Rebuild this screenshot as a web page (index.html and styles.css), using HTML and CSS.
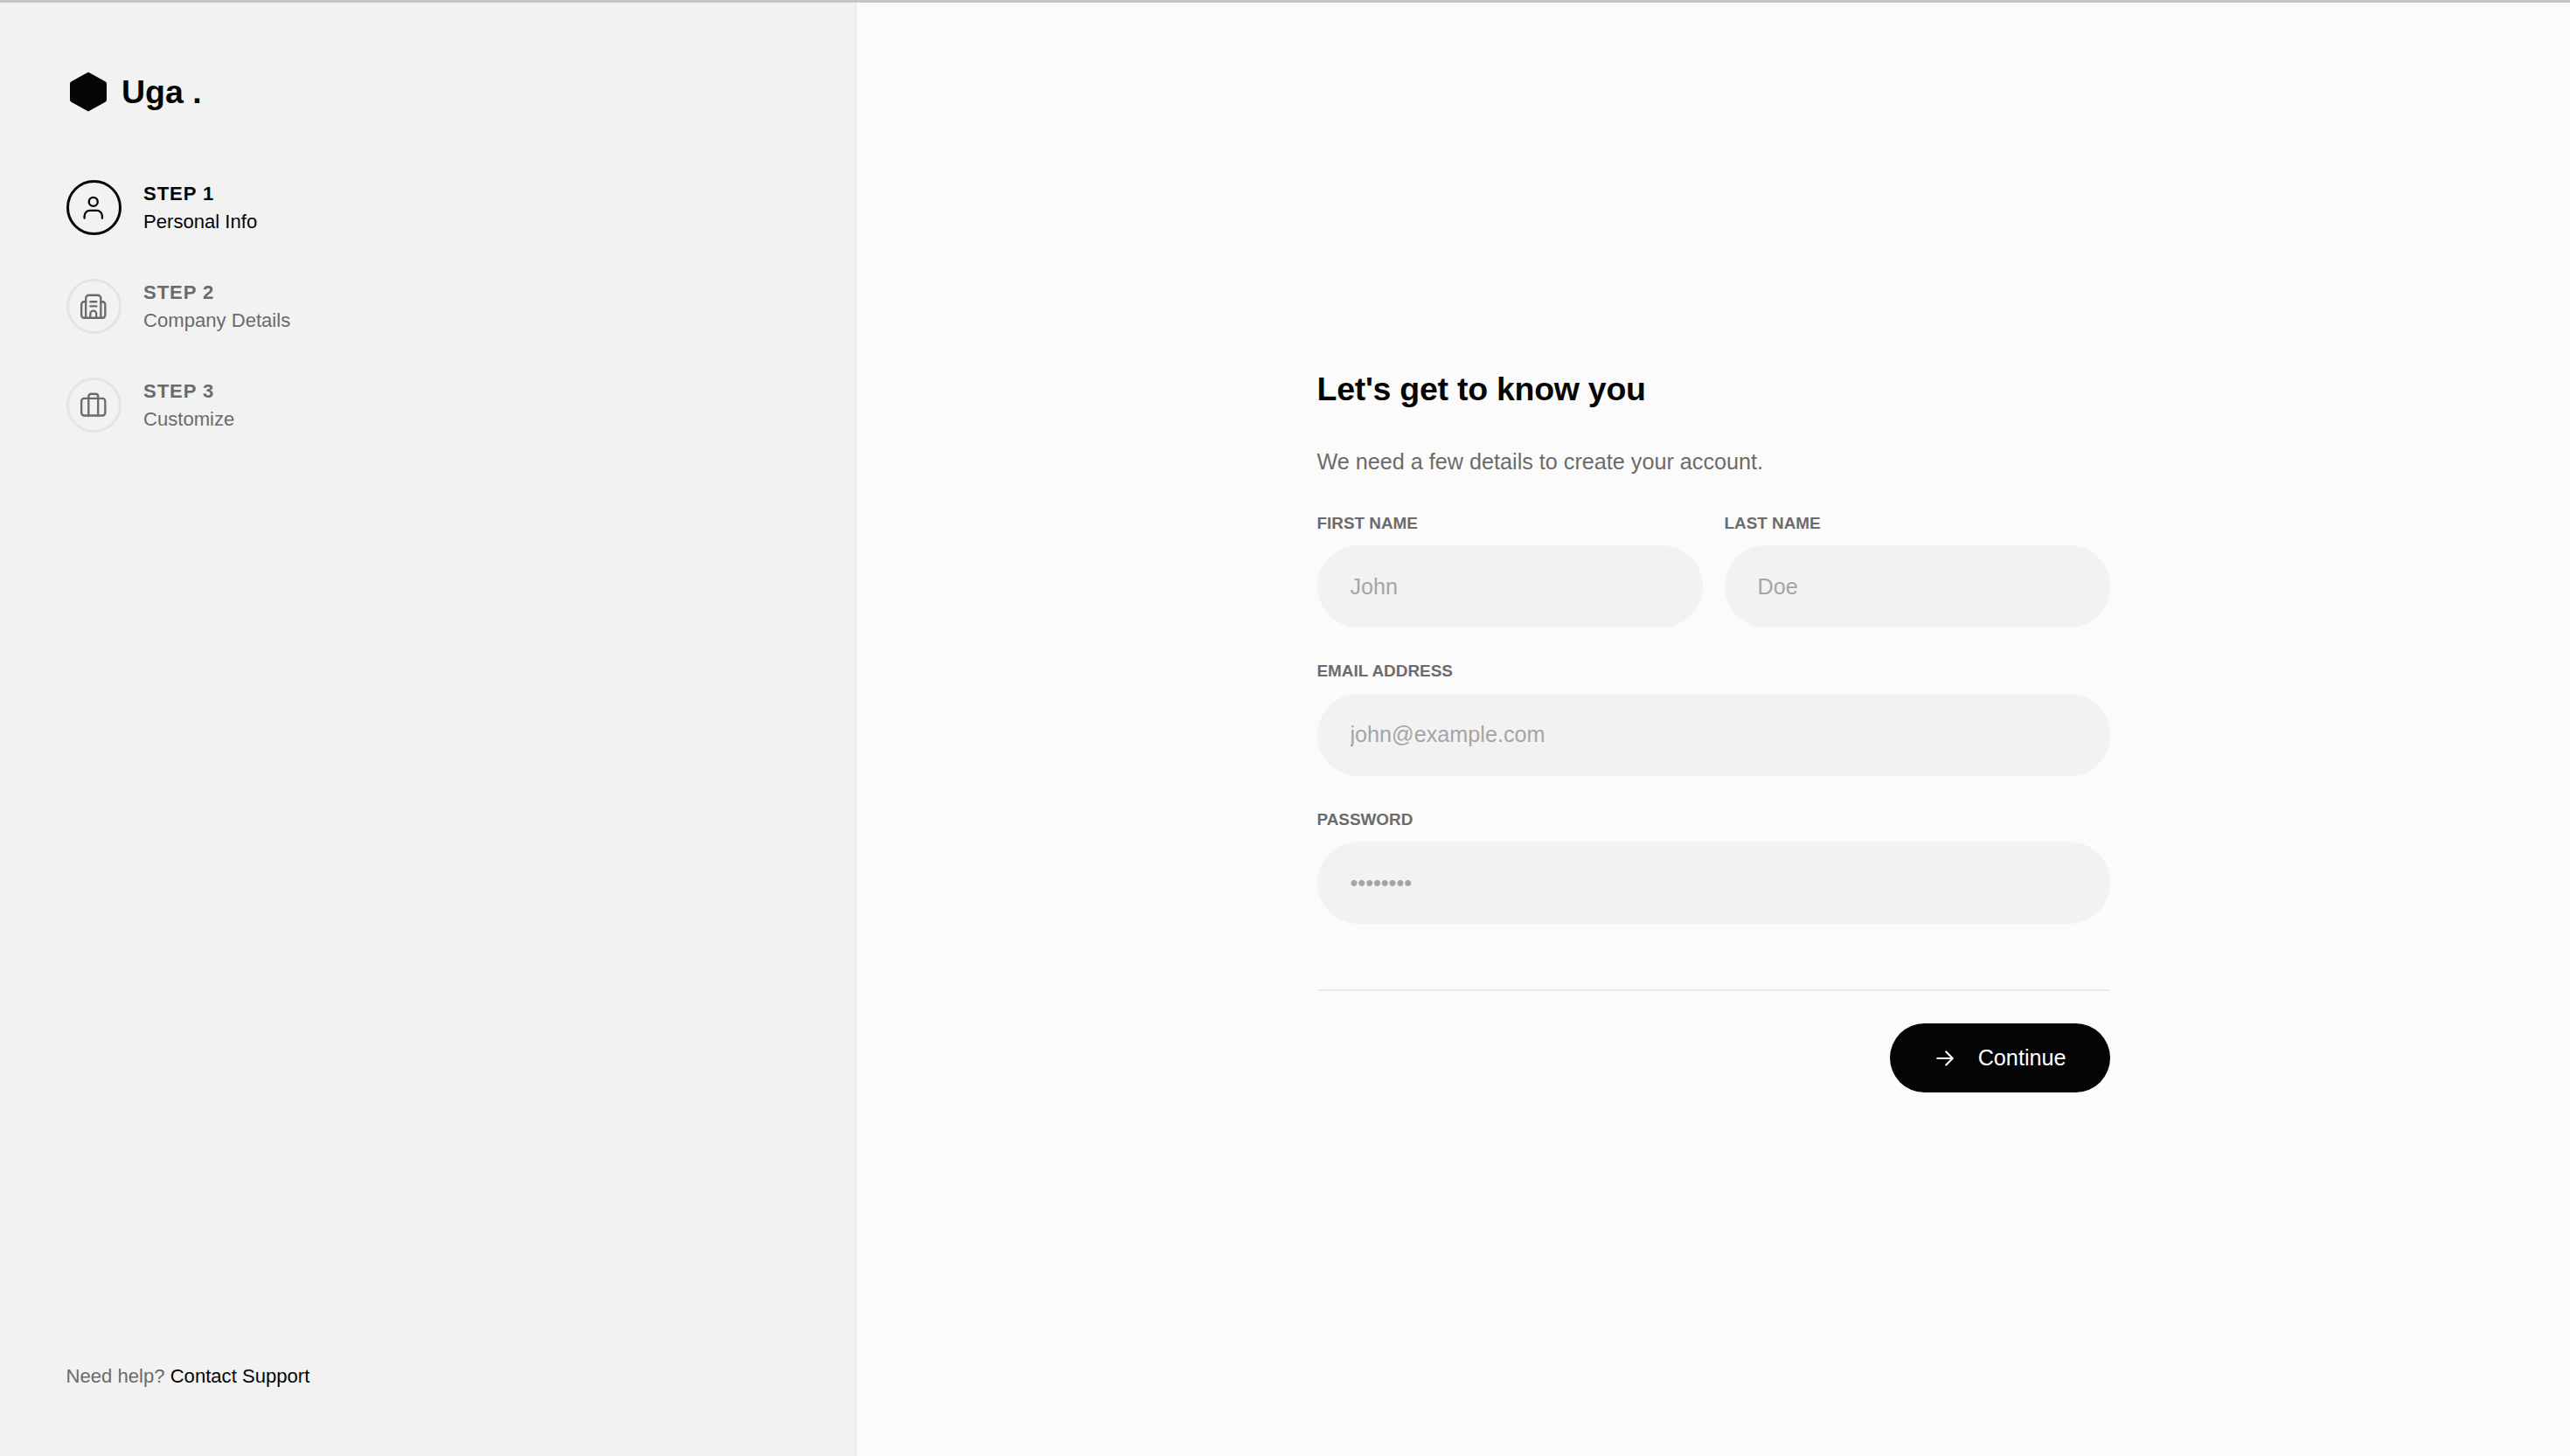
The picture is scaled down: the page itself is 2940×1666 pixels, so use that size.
FILE: index.html
```html
<!DOCTYPE html>
<html lang="en">
<head>
<meta charset="utf-8">
<title>Uga</title>
<link rel="stylesheet" href="styles.css">
</head>
<body>
<div class="topbar"></div>
<div class="layout">
  <aside class="sidebar">
    <div class="logo">
      <svg class="logo-mark" viewBox="0 0 42 46"><path d="M21 0.5 40 11a3 3 0 0 1 2 2.500v19a3 3 0 0 1-2 2.500L21 45.500 2 35a3 3 0 0 1-2-2.500v-19A3 3 0 0 1 2 11Z"/></svg>
      <span class="logo-text">Uga .</span>
    </div>
    <ol class="steps">
      <li class="step step-active">
        <span class="step-icon"><svg viewBox="0 0 24 24"><circle cx="12" cy="7.600" r="3.200"/><path d="M5.500 19.500V18a4 4 0 0 1 4-4h5a4 4 0 0 1 4 4v1.500"/></svg></span>
        <span class="step-text"><span class="step-num">STEP 1</span><span class="step-name">Personal Info</span></span>
      </li>
      <li class="step">
        <span class="step-icon"><svg viewBox="0 0 24 24"><path d="M6.500 20.300V6a2.300 2.300 0 0 1 2.300-2.300h6.400A2.300 2.300 0 0 1 17.500 6v14.300"/><path d="M17.500 8.500h1.200a2 2 0 0 1 2 2v7.800a2 2 0 0 1-2 2H5.300a2 2 0 0 1-2-2v-7.800a2 2 0 0 1 2-2h1.200"/><path d="M9.800 8.500h4.500M9.800 11.800h4.500"/><path d="M9.800 20.300v-3a2.200 2.200 0 0 1 4.400 0v3"/></svg></span>
        <span class="step-text"><span class="step-num">STEP 2</span><span class="step-name">Company Details</span></span>
      </li>
      <li class="step">
        <span class="step-icon"><svg viewBox="0 0 24 24"><rect x="3.300" y="7" width="17.400" height="12.500" rx="2"/><path d="M8.500 19.500V5.500a1.800 1.800 0 0 1 1.800-1.800h3.400a1.800 1.800 0 0 1 1.800 1.800v14"/></svg></span>
        <span class="step-text"><span class="step-num">STEP 3</span><span class="step-name">Customize</span></span>
      </li>
    </ol>
    <p class="help">Need help? <a class="help-link" href="#">Contact Support</a></p>
  </aside>
  <main class="main">
    <form class="form">
      <h1 class="title">Let's get to know you</h1>
      <p class="subtitle">We need a few details to create your account.</p>
      <div class="name-row">
        <label class="field"><span class="label">FIRST NAME</span><input class="input" type="text" placeholder="John"></label>
        <label class="field"><span class="label">LAST NAME</span><input class="input" type="text" placeholder="Doe"></label>
      </div>
      <label class="field"><span class="label">EMAIL ADDRESS</span><input class="input" type="email" placeholder="john@example.com"></label>
      <label class="field"><span class="label">PASSWORD</span><input class="input" type="password" placeholder="••••••••"></label>
      <div class="actions">
        <button class="continue" type="button">
          <svg class="arrow" viewBox="0 0 24 24"><path d="M5 12h14M13 6l6 6-6 6"/></svg>
          <span>Continue</span>
        </button>
      </div>
    </form>
  </main>
</div>
</body>
</html>
```

FILE: styles.css
```css
* { box-sizing: border-box; }
html, body { margin: 0; height: 100%; }
body {
  display: flex;
  flex-direction: column;
  font-family: "Liberation Sans", Arial, sans-serif;
  background: #fbfbfb;
  color: #050505;
}
.topbar { height: 3px; flex: none; background: #c9c4c4; }
.layout { flex: 1; display: flex; min-height: 0; }
.sidebar {
  width: 980px;
  flex: none;
  display: flex;
  flex-direction: column;
  padding: 79px 75px 74px 75.500px;
  background: #f2f2f2;
  border-right: 2px solid #ebebeb;
}
.logo { display: flex; align-items: center; gap: 17px; margin-left: 4.500px; }
.logo-mark { width: 42px; height: 46px; fill: #050505; }
.logo-text { font-size: 37.500px; font-weight: 700; line-height: 46px; }
.steps { list-style: none; margin: 78px 0 0; padding: 0; display: flex; flex-direction: column; gap: 50px; }
.step { display: flex; align-items: center; gap: 25.500px; color: #6b6b6b; }
.step-active { color: #050505; }
.step-icon {
  width: 63px; height: 63px; flex: none;
  display: flex; align-items: center; justify-content: center;
  border: 3px solid #e8e2e0; border-radius: 50%;
}
.step-active .step-icon { border-color: #050505; }
.step-icon svg {
  width: 37.500px; height: 37.500px;
  fill: none; stroke: currentColor; stroke-width: 1.500; stroke-linecap: round; stroke-linejoin: round;
}
.step-text { display: flex; flex-direction: column; gap: 4px; }
.step-num { font-size: 22.100px; font-weight: 700; letter-spacing: 0.900px; line-height: 28px; }
.step-name { font-size: 22.100px; line-height: 28px; }
.help { margin: auto 0 0; font-size: 22.100px; line-height: 34px; color: #6b6b6b; }
.help-link { color: #050505; text-decoration: none; }
.main { flex: 1; display: flex; align-items: center; justify-content: center; padding-top: 2px; }
.form { width: 907px; display: flex; flex-direction: column; gap: 38px; }
.title { margin: 0; font-size: 37.500px; line-height: 48px; font-weight: 700; letter-spacing: -0.270px; }
.subtitle { margin: 1.500px 0 2px; font-size: 25.200px; line-height: 38px; color: #6b6b6b; }
.name-row { display: grid; grid-template-columns: 1fr 1fr; gap: 25px; }
.field { display: flex; flex-direction: column; gap: 13.500px; }
.label { font-size: 18.900px; font-weight: 700; line-height: 24px; color: #6b6b6b; }
.input {
  width: 100%; height: 94px; padding: 0 38px;
  border: 0; border-radius: 47px; outline: 0;
  background: #f2f2f2; color: #050505;
  font: 25.200px "Liberation Sans", Arial, sans-serif;
}
.input::placeholder { color: #a8a4a4; opacity: 1; }
.actions { display: flex; justify-content: flex-end; margin-top: 37px; padding-top: 37px; border-top: 2px solid #eee8e6; }
.continue {
  height: 79px; padding: 0 50px 0 48px;
  display: flex; align-items: center; gap: 23px;
  border: 0; border-radius: 40px;
  background: #050505; color: #fff;
  font: 25.200px "Liberation Sans", Arial, sans-serif;
}
.arrow { width: 30px; height: 30px; fill: none; stroke: currentColor; stroke-width: 1.700; stroke-linecap: round; stroke-linejoin: round; }
```
